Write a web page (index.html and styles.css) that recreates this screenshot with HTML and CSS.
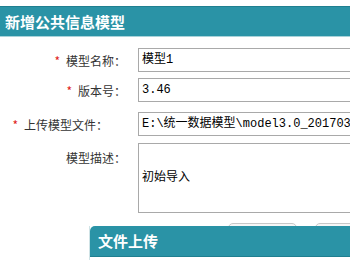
FILE: index.html
```html
<!DOCTYPE html>
<html lang="zh-CN">
  <head>
    <meta charset="UTF-8">
    <title>新增公共信息模型</title>
    <link rel="stylesheet" href="styles.css">
  </head>
  <body>
    <div class="panel-title">新增公共信息模型</div>

    <div class="form">
      <div class="row">
        <label class="label"><span class="req">*</span>模型名称：</label>
        <div class="field">模型1</div>
      </div>
      <div class="row row-version">
        <label class="label"><span class="req">*</span>版本号：</label>
        <div class="field">3.46</div>
      </div>
      <div class="row row-file">
        <label class="label label-file"><span class="req">*</span>上传模型文件：</label>
        <div class="field">E:\统一数据模型\model3.0_201703</div>
      </div>
      <div class="row row-desc">
        <label class="label">模型描述：</label>
        <div class="field field-area">初始导入</div>
      </div>
      <div class="actions">
        <button class="btn"></button>
        <button class="btn"></button>
      </div>
    </div>

    <!-- upload dialog sits over the form -->
    <div class="dialog">
      <div class="dialog-title">文件上传</div>
    </div>
  </body>
</html>
```

FILE: styles.css
```css
html {
  overflow: hidden;
}
body {
  margin: 0;
  background: #fff;
  font-family: "Noto Sans CJK SC", sans-serif;
  font-size: 12px;
  color: #333;
}
.panel-title {
  margin-top: 6px;
  height: 29px;
  line-height: 29px;
  padding-left: 5px;
  background: #2a93a6;
  border-top: 1px solid #1f7f90;
  border-bottom: 1px solid #a8d3da;
  color: #fff;
  font-size: 15px;
  font-weight: bold;
}
.form {
  padding-top: 11px;
  width: 350px;
}
.row {
  display: flex;
  align-items: center;
  margin-bottom: 6px;
}
.row-version { margin-bottom: 10px; }
.row-file { margin-bottom: 7px; }
.row-desc { align-items: flex-start; }
.label {
  flex: none;
  width: 126px;
  padding-right: 12px;
  text-align: right;
  white-space: nowrap;
}
.label-file {
  width: 108px;
  padding-right: 30px;
}
.row-desc .label { padding-top: 6px; }
.req {
  color: #e02020;
  margin-right: 6px;
}
.field {
  flex: none;
  width: 300px;
  height: 22px;
  line-height: 22px;
  padding-left: 3px;
  border: 1px solid #a9a9a9;
  font-family: "Liberation Mono", "Noto Sans CJK SC", monospace;
  font-size: 12px;
  color: #000;
  white-space: nowrap;
}
.field-area {
  height: 68px;
  line-height: 68px;
}
.actions {
  display: flex;
  gap: 18px;
  padding-left: 228px;
  margin-top: 10px;
}
.btn {
  flex: none;
  width: 69px;
  height: 26px;
  border: 1px solid #c8c8c8;
  border-radius: 5px;
  background: #f6f6f6;
}
.dialog {
  position: absolute;
  left: 89px;
  right: 0;
  top: 226px;
  bottom: 0;
  background: #fff;
  border-left: 1px solid #cfe3e6;
}
.dialog-title {
  height: 30px;
  line-height: 30px;
  padding-left: 8px;
  background: #2a93a6;
  border-top-left-radius: 5px;
  border-bottom: 1px solid #1f7f90;
  color: #fff;
  font-size: 15px;
  font-weight: bold;
}
```
